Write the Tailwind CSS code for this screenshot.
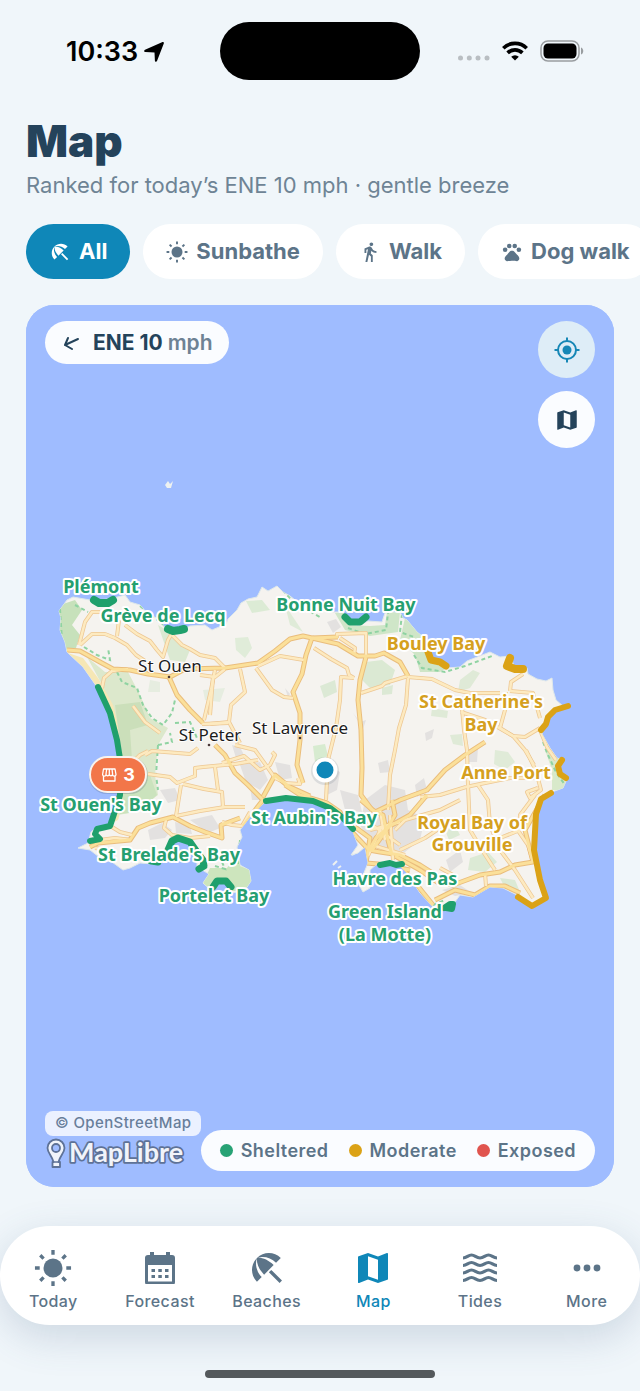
<!DOCTYPE html>
<html lang="en">
<head>
  <meta charset="UTF-8">
  <meta name="viewport" content="width=device-width, initial-scale=1.0">
  <title>Map</title>
  <script src="https://cdn.jsdelivr.net/npm/@tailwindcss/browser@4"></script>
</head>
<body class="min-h-screen flex flex-col overflow-x-hidden bg-[#f0f6fa] font-['Inter',sans-serif] text-[#5c7488]">
  <!-- Shared icons -->
  <svg class="hidden" aria-hidden="true">
    <symbol id="icon-beach" viewBox="0 0 24 24"><path d="M13.127 14.56l1.43-1.43 6.44 6.443L19.57 21zm4.293-5.73l2.86-2.86c-3.95-3.95-10.35-3.96-14.3-.02 3.93-1.3 8.31-.25 11.44 2.88zM5.95 5.98c-3.94 3.95-3.93 10.35.02 14.3l2.86-2.86C5.7 14.29 4.65 9.91 5.95 5.98zm.02-.02l-.01.01c-.38 3.01 1.17 6.88 4.3 10.02l5.73-5.73c-3.13-3.13-7.01-4.68-10.02-4.3z"/></symbol>
    <symbol id="icon-map" viewBox="0 0 24 24"><path d="M15 19l-6-2.11V5l6 2.11M20.5 3c-.06 0-.11 0-.16.03L15 5.1 9 3 3.36 4.9c-.21.07-.36.25-.36.48V20.5a.5.5 0 0 0 .5.5c.05 0 .11 0 .16-.03L9 18.9l6 2.1 5.64-1.9c.21-.1.36-.25.36-.48V3.5a.5.5 0 0 0-.5-.5z"/></symbol>
    <symbol id="icon-sun" viewBox="0 0 40 40">
      <circle cx="20" cy="20" r="10"/>
      <path d="M20 1v5M20 34v5M1 20h5M34 20h5M6.600 6.600l3.500 3.500M29.900 29.900l3.500 3.500M6.600 33.400l3.500-3.500M29.900 10.100l3.500-3.500" stroke="currentColor" stroke-width="3.500"/>
    </symbol>
  </svg>

  <!-- Status bar -->
  <div class="flex justify-between px-14 pt-[22px] text-black">
    <div class="flex w-[126px] items-center gap-1.5 pl-2.5 text-[27px] font-semibold h-[60px]">
      <span>10:33</span>
      <svg class="size-5 shrink-0" viewBox="0 0 20 20" fill="currentColor"><path d="M19.800 1.500 13 19c-.5 1.200-2 1-2.100-.3L10.500 10.500 1.500 10C-.1 9.900-.2 8.300 1 7.700L18 .2c1.200-.5 2.200.2 1.800 1.300z"/></svg>
    </div>
    <div class="h-[58px] w-[200px] rounded-full bg-black"></div>
    <div class="flex w-[126px] h-[58px] items-center gap-3">
      <svg class="h-5 w-8 shrink-0" viewBox="0 0 32 20" fill="#b9bec2"><circle cx="2.500" cy="17" r="2.500"/><circle cx="11.300" cy="17" r="2.500"/><circle cx="20" cy="17" r="2.500"/><circle cx="29" cy="17" r="2.500"/></svg>
      <svg class="h-5 w-[26px] shrink-0" viewBox="0 0 26 20" fill="none" stroke="currentColor" stroke-width="3.600"><path d="M1.300 7.200a16.500 16.500 0 0 1 23.400 0M5.600 11.900a10.500 10.500 0 0 1 14.800 0"/><path d="M13 19.500 9.200 15.700a5.400 5.400 0 0 1 7.600 0z" fill="currentColor" stroke="none"/></svg>
      <svg class="h-[22px] w-[44px] shrink-0" viewBox="0 0 44 22"><rect x="1" y="1" width="38" height="20" rx="7" fill="none" stroke="#999da0" stroke-width="1.500"/><rect x="3.500" y="3.500" width="33" height="15" rx="4.500"/><path d="M41 7.500c3 1 3 6 0 7z" fill="#999da0"/></svg>
    </div>
  </div>

  <!-- Page heading -->
  <header class="mt-[31px] px-[26px]">
    <h1 class="mb-0.5 text-[44px] leading-14 font-black text-[#24435b]">Map</h1>
    <p class="text-[22px] leading-7 whitespace-nowrap text-[#6e8495]">Ranked for today’s ENE 10 mph · gentle breeze</p>
  </header>

  <!-- Activity filters -->
  <div class="mt-[25px] flex gap-[13px] overflow-hidden pl-[26px] text-[22px] font-bold whitespace-nowrap">
    <button class="flex h-[55px] shrink-0 items-center gap-2 rounded-full bg-[#0f87b8] px-[23px] text-white"><svg class="size-[22px]" fill="currentColor"><use href="#icon-beach"/></svg>All</button>
    <button class="flex h-[55px] shrink-0 items-center gap-2 rounded-full bg-white px-[23px]"><svg class="size-[22px]" fill="currentColor"><use href="#icon-sun"/></svg>Sunbathe</button>
    <button class="flex h-[55px] shrink-0 items-center gap-2 rounded-full bg-white px-[23px]"><svg class="size-[22px]" viewBox="0 0 24 24" fill="currentColor"><path d="M13.500 5.500c1.100 0 2-.9 2-2s-.9-2-2-2-2 .9-2 2 .9 2 2 2zM9.800 8.900L7 23h2.100l1.800-8 2.100 2v6h2v-7.500l-2.100-2 .6-3C14.800 12 16.800 13 19 13v-2c-1.900 0-3.500-1-4.300-2.400l-1-1.600c-.4-.6-1-1-1.700-1-.3 0-.5.100-.8.100L6 8.300V13h2V9.600l1.800-.7"/></svg>Walk</button>
    <button class="flex h-[55px] shrink-0 items-center gap-2 rounded-full bg-white px-[23px]"><svg class="size-[22px]" viewBox="0 0 24 24" fill="currentColor"><circle cx="4.500" cy="9.500" r="2.500"/><circle cx="9" cy="5.500" r="2.500"/><circle cx="15" cy="5.500" r="2.500"/><circle cx="19.500" cy="9.500" r="2.500"/><path d="M17.340 14.860c-.87-1.020-1.600-1.890-2.480-2.910-.46-.54-1.050-1.080-1.750-1.320-.11-.04-.22-.07-.33-.09-.25-.04-.52-.04-.78-.04s-.53 0-.79.050c-.11.020-.22.050-.33.090-.7.240-1.280.780-1.750 1.320-.87 1.020-1.600 1.890-2.480 2.910-1.310 1.310-2.920 2.760-2.620 4.790.29 1.020 1.020 2.030 2.330 2.320.73.150 3.060-.44 5.540-.44h.18c2.480 0 4.810.58 5.540.44 1.310-.29 2.040-1.310 2.330-2.320.31-2.040-1.300-3.490-2.610-4.800z"/></svg>Dog walk</button>
  </div>

  <!-- Map -->
  <main class="relative mx-[26px] mt-[26px] overflow-hidden rounded-[28px] bg-[#9fbcff]">
    <svg class="block h-auto w-full" viewBox="26 305 588 882" role="img" aria-label="Map of Jersey beaches">
      <defs>
        <path id="coast" d="M67 600 73 597 90 600 110 599 125 595 130 602 140 605 147 613 160 620 165 628 180 631 190 626 205 625 212 630 226 624 228 619 237 610 241 603 248 599 257 597 262 587 268 591 277 586 283 592 290 596 300 604 318 606 330 612 343 612 346 622 358 626 368 621 382 622 385 613 400 612 403 618 407 620 417 632 427 640 427 653 432 663 447 668 460 667 467 661 490 652 500 657 510 656 515 668 527 668 528 674 537 679 546 681 552 678 553 690 556 700 563 706 553 713 543 727 542 734 550 748 557 758 563 760 558 769 567 779 563 788 552 792 543 800 535 817 534 850 543 883 547 897 533 907 517 895 503 888 490 887 473 897 460 895 455 902 454 910 443 908 433 907 420 893 407 873 400 866 377 864 370 870 370 888 363 892 359 885 368 863 365 847 358 853 351 855 358 845 353 832 343 820 333 808 313 802 287 798 265 802 250 817 240 830 242 837 237 847 240 865 249 870 251 881 245 890 232 893 231 884 217 881 213 892 203 883 209 874 197 867 197 855 190 843 177 838 168 847 163 853 153 864 140 863 130 868 123 870 112 862 103 860 90 850 78 848 88 843 91 832 97 827 110 826 113 813 120 797 120 753 113 727 108 707 97 687 83 667 67 652 65 642 60 630 61 618 59 611z"/>
        <clipPath id="land"><use href="#coast"/></clipPath>
        <g id="lanes">
          <path d="M79 645 85 622 92 612 100 612"/>
          <path d="M80 645 92 634 105 634 115 638 127 645 136 655 145 661"/>
          <path d="M117 636 119 620"/><path d="M125 625 137 634 150 641 157 650 163 657 168 640 172 633"/>
          <path d="M172 635 182 645 190 649 200 655 215 658 225 668"/>
          <path d="M102 688 104 678 112 671 128 669"/>
          <path d="M215 670 211 690 204 720"/><path d="M213 677 210 715"/><path d="M200 675 215 677 225 669"/>
          <path d="M202 724 228 723"/><path d="M240 669 245 692 231 705 229 722 240 743"/><path d="M229 722 210 724"/>
          <path d="M258 666 280 656 304 660"/><path d="M256 668 272 690 284 697 293 698"/>
          <path d="M314 648 331 659 347 668 349 675 354 678"/><path d="M337 638 337 634 366 633 366 657"/>
          <path d="M340 638 355 648 354 655"/><path d="M354 678 341 677 340 700 336 728 328 760 326 800"/>
          <path d="M361 693 382 686 385 683 408 676"/>
          <path d="M408 678 406 705 399 728 395 750 390 775 388 810"/>
          <path d="M408 677 432 679 455 690 470 693 500 693"/><path d="M461 697 464 730 467 750 468 785 470 830 482 850 495 870"/>
          <path d="M510 691 511 682 523 674"/><path d="M510 691 533 693 540 718"/><path d="M506 692 505 710 500 728 513 736 525 737 540 728"/>
          <path d="M461 712 485 720 513 736 525 750 534 765"/><path d="M540 730 547 747 556 760"/>
          <path d="M526 750 536 771 541 790 530 798 527 792 538 788"/><path d="M466 787 440 795 420 797"/>
          <path d="M466 787 485 783 510 778 535 778"/><path d="M478 785 488 800 490 825 500 850 515 870 533 898"/>
          <path d="M535 795 520 815 519 832 528 845 533 862"/><path d="M520 830 500 838 480 846"/>
          <path d="M145 755 152 751 165 752 190 754 198 748"/><path d="M148 774 170 777 177 783 195 776 195 768 203 767 235 764 258 760"/>
          <path d="M183 784 204 789 222 792 223 807"/><path d="M215 767 218 790"/><path d="M181 785 176 816"/><path d="M176 816 200 811 225 807 245 807"/>
          <path d="M166 820 164 828 172 835 190 838 210 836"/><path d="M112 827 120 832 132 835"/><path d="M100 840 115 838 131 840"/>
          <path d="M222 822 232 825 242 826 250 812"/><path d="M95 848 110 850"/>
          <path d="M222 763 244 756 260 770 270 765 275 755 272 752"/><path d="M284 783 300 784 298 778"/><path d="M235 745 255 750 268 768 275 778 288 784"/>
          <path d="M120 775 140 755 148 751"/><path d="M133 706 145 722 160 733"/>
          <path d="M400 850 425 838 440 828"/><path d="M395 830 405 820 440 810 460 800"/><path d="M380 810 385 840M370 830 400 822M372 845 405 855M390 815 393 860M368 822 400 845M382 826 368 856"/>
          <path d="M485 873 486 886"/><path d="M440 868 455 876"/>
        </g>
        <g id="roads">
          <path d="M67 650 80 651 100 662 113 669 130 670 148 674 170 677 185 669 225 668 258 663 275 651 290 639 303 636 312 638 338 637"/>
          <path d="M312 638 338 644 358 656 375 656 384 653 400 662 408 676"/>
          <path d="M312 638 306 655 302 674 293 692 300 713 300 740 297 765 303 783"/>
          <path d="M366 657 360 680 358 700 361 730 362 768 361 795 372 810"/>
          <path d="M169 677 177 695 190 710 203 723"/>
          <path d="M215 745 225 755 235 773 248 785 263 800"/>
          <path d="M90 847 98 843 130 840 138 828 150 823 173 817 190 826 205 832 222 838 221 825 240 818"/>
          <path d="M263 800 243 826"/><path d="M285 785 300 795 327 803 340 812 352 832 369 850"/>
          <path d="M263 797 275 775 288 786 310 796"/>
          <path d="M369 850 380 852 400 855 420 865 450 884"/><path d="M372 810 383 815 388 840 392 855"/>
          <path d="M361 800 375 812 400 800 427 790 445 770 465 755 485 742"/>
          <path d="M369 850 376 838 390 826 410 815 427 795"/><path d="M372 850 385 832 395 815 392 800"/>
          <path d="M400 866 417 885 433 905"/><path d="M395 856 420 870 437 882 453 885 480 875 500 872 515 865 533 862 525 830 545 795"/>
          <path d="M435 900 455 890 475 895 490 886 505 886 520 893"/>
          <path d="M355 827 370 838 366 863 378 864 410 870"/>
        </g>
      </defs>
      <rect x="26" y="305" width="588" height="882" fill="#9fbcff"/>
      <path d="M165 485 168 481 170 484 173 481 171 488 167 488z" fill="#eef1f0"/>
      <path d="M333 865 337 861M338 868l3-2M352 855l5-3" stroke="#eef1f0" stroke-width="2"/>
      <use href="#coast" fill="#f5f3ef" stroke="#dfe8ea" stroke-width="1"/>
      <g clip-path="url(#land)">
        <!-- Beach, heath and woodland -->
        <path d="M65 652 80 665 97 687 108 707 118 740 121 797 108 825 118 820 127 790 124 740 115 705 98 678 83 658z" fill="#f6e7b5"/>
        <path d="M60 605 75 600 82 610 72 625 80 635 76 648 66 650 58 630z" fill="#c7e1bb"/>
        <path d="M87 657 105 672 128 672 140 695 150 718 168 728 158 745 155 775 158 795 135 812 118 815 126 790 122 740 113 705z" fill="#dce8cc"/>
        <path d="M115 705 140 702 148 725 130 730 132 760 124 772z" fill="#cbdfba"/>
        <path d="M123 780 150 775 157 795 138 812 120 814z" fill="#cbe3bd"/>
        <path d="M158 625 170 632 180 645 190 650 185 662 170 660z" fill="#dbe9d2"/>
        <path d="M235 638 248 637 252 648 245 658 236 650z" fill="#e0ecd9"/>
        <path d="M246 601 262 600 270 610 252 613z" fill="#dcebd5"/><path d="M285 605 295 620 303 632 290 625z" fill="#dfebd8"/>
        <path d="M335 613 348 612 348 625 370 626 385 625 387 612 400 612 398 632 370 636 345 630z" fill="#cfe6c8"/>
        <path d="M405 618 420 632 428 643 432 663 447 668 440 672 420 672 415 655 400 640z" fill="#cfe5c7"/>
        <path d="M366 662 382 660 395 670 390 685 370 688 362 680z" fill="#dbe9d3"/>
        <path d="M320 686 335 680 337 692 324 698zM382 688 393 685 392 694 382 695z" fill="#dce9d5"/>
        <path d="M460 680 473 670 480 673 470 688 458 692zM432 708 448 711 447 718 431 716zM450 735 462 734 463 746 453 744z" fill="#dfead7"/>
        <path d="M495 750 508 752 515 762 505 770 494 764z" fill="#e0ebd8"/>
        <path d="M313 746 325 744 328 756 315 762z" fill="#d7ebd0"/>
        <path d="M545 750 560 758 560 775 567 780 563 790 552 790 552 770z" fill="#d8e9ca"/>
        <path d="M470 858 488 852 497 862 485 872 468 870zM500 878 515 880 520 892 505 888zM445 830 455 825 460 835 449 840z" fill="#dcead5"/>
        <path d="M203 883 210 868 227 868 239 850 240 866 250 870 251 882 244 891 213 891z" fill="#cde5bd"/>
        <path d="M203 690 225 688 220 702 205 700zM150 680 160 682 160 692 148 692z" fill="#e6ede0"/>
        <!-- Built-up areas -->
        <g fill="#e3e1e0">
          <path d="M160 790 175 788 180 800 168 803zM148 830 162 823 172 830 165 838 150 840zM190 820 212 815 220 828 208 833zM175 822 190 826 192 834 176 833z"/>
          <path d="M240 765 260 762 268 780 260 790 246 782zM232 745 240 747 245 757 236 758zM275 762 290 765 292 778 280 780zM250 787 262 800 252 800z"/>
          <path d="M327 765 340 772 337 790 327 795zM378 763 388 760 390 772 380 773zM340 790 358 795 362 812 345 810z"/>
          <path d="M365 800 385 785 405 790 408 810 425 818 420 840 405 852 372 846 360 825z"/>
          <path d="M415 785 424 778 427 790 417 797zM446 860 460 850 463 862 450 872zM466 750 478 748 477 762 467 762zM327 622 336 619 341 627 333 633zM425 733 434 729 432 738 426 741zM442 890 460 885 472 893 455 896z"/>
          <path d="M285 688 290 694 288 697zM353 713 360 722 366 720 363 729z"/>
        </g>
        <g fill="none" stroke="#8fd3a2" stroke-width="2" stroke-dasharray="4 3">
          <path d="M75 605 88 612M84 647 97 655 110 660 108 648M117 672 122 682 137 688 143 705 152 718 163 725 172 713 175 700M175 723 190 722 197 738M158 745 172 742 170 733M158 745 156 775 158 790"/>
          <path d="M60 609 62 640M140 606 170 630M283 590 293 602 320 617M348 628 365 634 386 630 388 613M402 614 400 632 414 637"/>
          <path d="M414 655 422 668 445 672 465 666 492 656M543 742 548 755 556 772 565 785M240 840 238 864M215 866 225 869 222 862M433 905 445 900"/>
        </g>
        <use href="#lanes" fill="none" stroke="#edc793" stroke-width="4" stroke-linejoin="round"/>
        <use href="#roads" fill="none" stroke="#eabd7c" stroke-width="5" stroke-linejoin="round"/>
        <use href="#lanes" fill="none" stroke="#fdeac0" stroke-width="2.500" stroke-linejoin="round"/>
        <use href="#roads" fill="none" stroke="#fbe09a" stroke-width="3" stroke-linejoin="round"/>
      </g>

      <!-- Shore ratings -->
      <g fill="none" stroke-width="6" stroke-linecap="round" stroke-linejoin="round">
        <g stroke="#1fa06c">
          <path d="M94 600 99 603 108 603 113 600" stroke-width="8"/>
          <path d="M168 629 173 631 180 630 184 629" stroke-width="8"/>
          <path d="M345 617 350 622 360 622 366 617" stroke-width="7"/>
          <path d="M98 687 110 713 117 740 121 765 120 795 114 814 110 826 97 829 95 834 100 839 90 841"/>
          <path d="M266 801 286 798 313 801 330 808 343 818 353 829"/>
          <path d="M151 861 158 862M168 850 172 841 178 838 190 842 197 852 203 860 204 866 199 869" stroke-width="7"/>
          <path d="M213 887 217 881 226 881 231 887" stroke-width="7"/>
          <path d="M380 865 390 863 396 865 402 864"/>
          <path d="M444 908 450 904 453 904 452 909 446 908"/>
        </g>
        <g stroke="#dba216">
          <path d="M428 652 431 660 440 662 446 666" stroke-width="7"/>
          <path d="M510 658 507 666 515 669 523 669" stroke-width="8"/>
          <path d="M568 706 555 710 548 717 546 724 541 730"/>
          <path d="M562 760 558 766 560 774 566 778"/>
          <path d="M551 793 541 799 536 814 534 850 540 880 546 898 532 906 518 897"/>
        </g>
      </g>

      <!-- Place names -->
      <g class="font-['Noto_Sans',sans-serif] text-[17px]" text-anchor="middle" fill="#1c1c1c" stroke="#fff" stroke-width="2" paint-order="stroke" stroke-linejoin="round">
        <text x="170" y="672">St Ouen</text>
        <text x="210" y="741">St Peter</text>
        <text x="300" y="734">St Lawrence</text>
      </g>
      <g fill="#4b3838"><circle cx="169" cy="677" r="1.300"/><circle cx="209" cy="745" r="1.300"/><circle cx="300" cy="738" r="1.300"/></g>
      <g class="font-['Noto_Sans',sans-serif] text-[18px] font-bold" text-anchor="middle" fill="#259f70" stroke="#fff" stroke-width="4" paint-order="stroke" stroke-linejoin="round">
        <text x="101" y="593">Plémont</text>
        <text x="163" y="622">Grève de Lecq</text>
        <text x="346" y="611">Bonne Nuit Bay</text>
        <text x="101" y="811">St Ouen's Bay</text>
        <text x="169" y="861">St Brelade's Bay</text>
        <text x="214" y="902">Portelet Bay</text>
        <text x="314" y="824">St Aubin's Bay</text>
        <text x="395" y="885">Havre des Pas</text>
        <text x="385" y="918">Green Island</text>
        <text x="385" y="941">(La Motte)</text>
        <g fill="#d5a01e">
          <text x="436" y="650">Bouley Bay</text>
          <text x="481" y="708">St Catherine's</text>
          <text x="481" y="731">Bay</text>
          <text x="506" y="779">Anne Port</text>
          <text x="472" y="829">Royal Bay of</text>
          <text x="472" y="851">Grouville</text>
        </g>
      </g>

      <!-- Current position -->
      <circle cx="325" cy="771" r="14" fill="#4c6070" opacity=".15"/>
      <circle cx="325" cy="770" r="12.500" fill="#fff"/><circle cx="325" cy="770" r="8.500" fill="#0f87b8"/>

      <!-- Kiosk cluster -->
      <rect x="89" y="757" width="59" height="37" rx="18" fill="#4c6070" opacity=".25"/>
      <rect x="90" y="757" width="56" height="35" rx="17.500" fill="#f27649" stroke="#f8f3ee" stroke-width="2"/>
      <g fill="none" stroke="#fff" stroke-width="1.300" stroke-linejoin="round">
        <path d="M103.500 769h11.500l1 5.500a1.700 1.700 0 0 1-3.400 0 1.700 1.700 0 0 1-3.300 0 1.700 1.700 0 0 1-3.300 0 1.700 1.700 0 0 1-3.400 0zM106.700 769l-.7 5M109.300 769v5M112 769l.6 5M103.500 776v5h11.500v-5"/>
      </g>
      <text x="129" y="781" class="text-[18px] font-bold" text-anchor="middle" fill="#fff">3</text>
    </svg>

    <!-- Wind -->
    <div class="absolute top-4 left-[19px] flex h-[43px] items-center gap-3 rounded-full bg-[#fafcff] px-4 text-[21px] font-bold whitespace-nowrap text-[#24435b]">
      <svg class="size-5" viewBox="0 0 20 20" fill="none" stroke="currentColor" stroke-width="2" stroke-linecap="round" stroke-linejoin="round"><path d="M17 6 4 12M7 5 4 12l7 4"/></svg>
      <span>ENE 10 <span class="font-semibold text-[#6e8294]">mph</span></span>
    </div>

    <!-- Map controls -->
    <div class="absolute top-4 right-[19px] flex flex-col gap-[13px]">
      <button class="flex size-[57px] items-center justify-center rounded-full bg-[#deedf7] text-[#1687b6]" aria-label="My location">
        <svg class="size-[26px]" viewBox="0 0 26 26" fill="none" stroke="currentColor" stroke-width="2"><circle cx="13" cy="13" r="9"/><circle cx="13" cy="13" r="4.500" fill="currentColor" stroke="none"/><path d="M13 .5V4M13 22v3.500M.5 13H4M22 13h3.500"/></svg>
      </button>
      <button class="flex size-[57px] items-center justify-center rounded-full bg-[#fafcff] text-[#24435b]" aria-label="Map style">
        <svg class="size-[26px]" fill="currentColor"><use href="#icon-map"/></svg>
      </button>
    </div>

    <!-- Attribution -->
    <a href="#osm" class="absolute bottom-[51px] left-[19px] flex h-[25px] items-center rounded-lg bg-[#ebf1ff] px-[10px] text-[15px] font-medium tracking-wide whitespace-nowrap text-[#687e9a]">© OpenStreetMap</a>
    <a href="#maplibre" class="absolute bottom-3 left-[19px]" aria-label="MapLibre">
      <svg class="block h-[42px] w-[150px]" viewBox="0 -4 150 42">
        <path d="M11 2.500a8.500 8.500 0 0 0-8.500 8.500c0 5 4.500 7.500 6 14H7.500v5h7.500v-5H13.500c1.500-6.500 6-9 6-14A8.500 8.500 0 0 0 11 2.500zm0 4.500a4 4 0 1 1 0 8 4 4 0 0 1 0-8z" fill="#f1f4fa" fill-rule="evenodd" stroke="#5e7297" stroke-width="1.800" stroke-linejoin="round"/>
        <path d="M8 25h6.500" stroke="#5e7297" stroke-width="1.500"/>
        <text x="24" y="25" class="font-['Lato',sans-serif] text-[27px] font-bold" fill="#f1f4fa" stroke="#5e7297" stroke-width="3.500" paint-order="stroke" stroke-linejoin="round">MapLibre</text>
      </svg>
    </a>

    <!-- Legend -->
    <div class="absolute right-[19px] bottom-4 flex h-[41px] items-center gap-5 rounded-full bg-[#fafcff] px-[19px] text-[18px] font-semibold tracking-wide whitespace-nowrap">
      <span class="flex items-center gap-2"><i class="size-[13px] rounded-full bg-[#27a275]"></i>Sheltered</span>
      <span class="flex items-center gap-2"><i class="size-[13px] rounded-full bg-[#dba216]"></i>Moderate</span>
      <span class="flex items-center gap-2"><i class="size-[13px] rounded-full bg-[#e0544e]"></i>Exposed</span>
    </div>
  </main>

  <!-- Tab bar -->
  <nav class="mt-[39px] grid h-[99px] shrink-0 grid-cols-6 rounded-full bg-white text-[16px] leading-5 font-medium tracking-wide shadow-[0_12px_40px_rgba(60,90,130,0.2)]">
    <a href="#today" class="flex flex-col items-center justify-center gap-[7px] pt-[11px]"><svg class="size-[38px] -my-[3px]" fill="currentColor"><use href="#icon-sun"/></svg>Today</a>
    <a href="#forecast" class="flex flex-col items-center justify-center gap-[7px] pt-[11px]">
      <svg class="size-8" viewBox="0 0 32 32" fill="currentColor"><path fill-rule="evenodd" d="M4 3h2V0h4v3h12V0h4v3h2q3 0 3 3v24q0 3-3 3H4q-3 0-3-3V6q0-3 3-3zm0 10v16.500h24V13z"/><path d="M7.500 17h3.500v3H7.500zM14.300 17h3.500v3h-3.500zM21 17h3.500v3H21zM7.500 23h3.500v3H7.500zM14.300 23h3.500v3h-3.500zM21 23h3.500v3H21z"/></svg>Forecast</a>
    <a href="#beaches" class="flex flex-col items-center justify-center gap-[7px] pt-[11px]"><svg class="size-10 -my-1" fill="currentColor"><use href="#icon-beach"/></svg>Beaches</a>
    <a href="#map" class="flex flex-col items-center justify-center gap-[7px] pt-[11px] text-[#0f87b8]"><svg class="size-10 -my-1" fill="currentColor"><use href="#icon-map"/></svg>Map</a>
    <a href="#tides" class="flex flex-col items-center justify-center gap-[7px] pt-[11px]">
      <svg class="h-8 w-[34px]" viewBox="0 0 34 32" fill="none" stroke="currentColor" stroke-width="3.200"><path d="M0 6c4 0 5-3 8.500-3S13 6 17 6s5-3 8.500-3S30 6 34 6M0 13.500c4 0 5-3 8.500-3s4.500 3 8.500 3 5-3 8.500-3 4.500 3 8.500 3M0 21c4 0 5-3 8.500-3s4.500 3 8.500 3 5-3 8.500-3 4.500 3 8.500 3M0 28.500c4 0 5-3 8.500-3s4.500 3 8.500 3 5-3 8.500-3 4.500 3 8.500 3"/></svg>Tides</a>
    <a href="#more" class="flex flex-col items-center justify-center gap-[7px] pt-[11px]"><svg class="size-8" viewBox="0 0 32 32" fill="currentColor"><circle cx="6" cy="16" r="3.400"/><circle cx="16" cy="16" r="3.400"/><circle cx="26" cy="16" r="3.400"/></svg>More</a>
  </nav>

  <!-- Home indicator -->
  <div class="mx-auto mt-[45px] mb-3 h-2 w-[230px] shrink-0 rounded-full bg-[#54595c]"></div>
</body>
</html>
